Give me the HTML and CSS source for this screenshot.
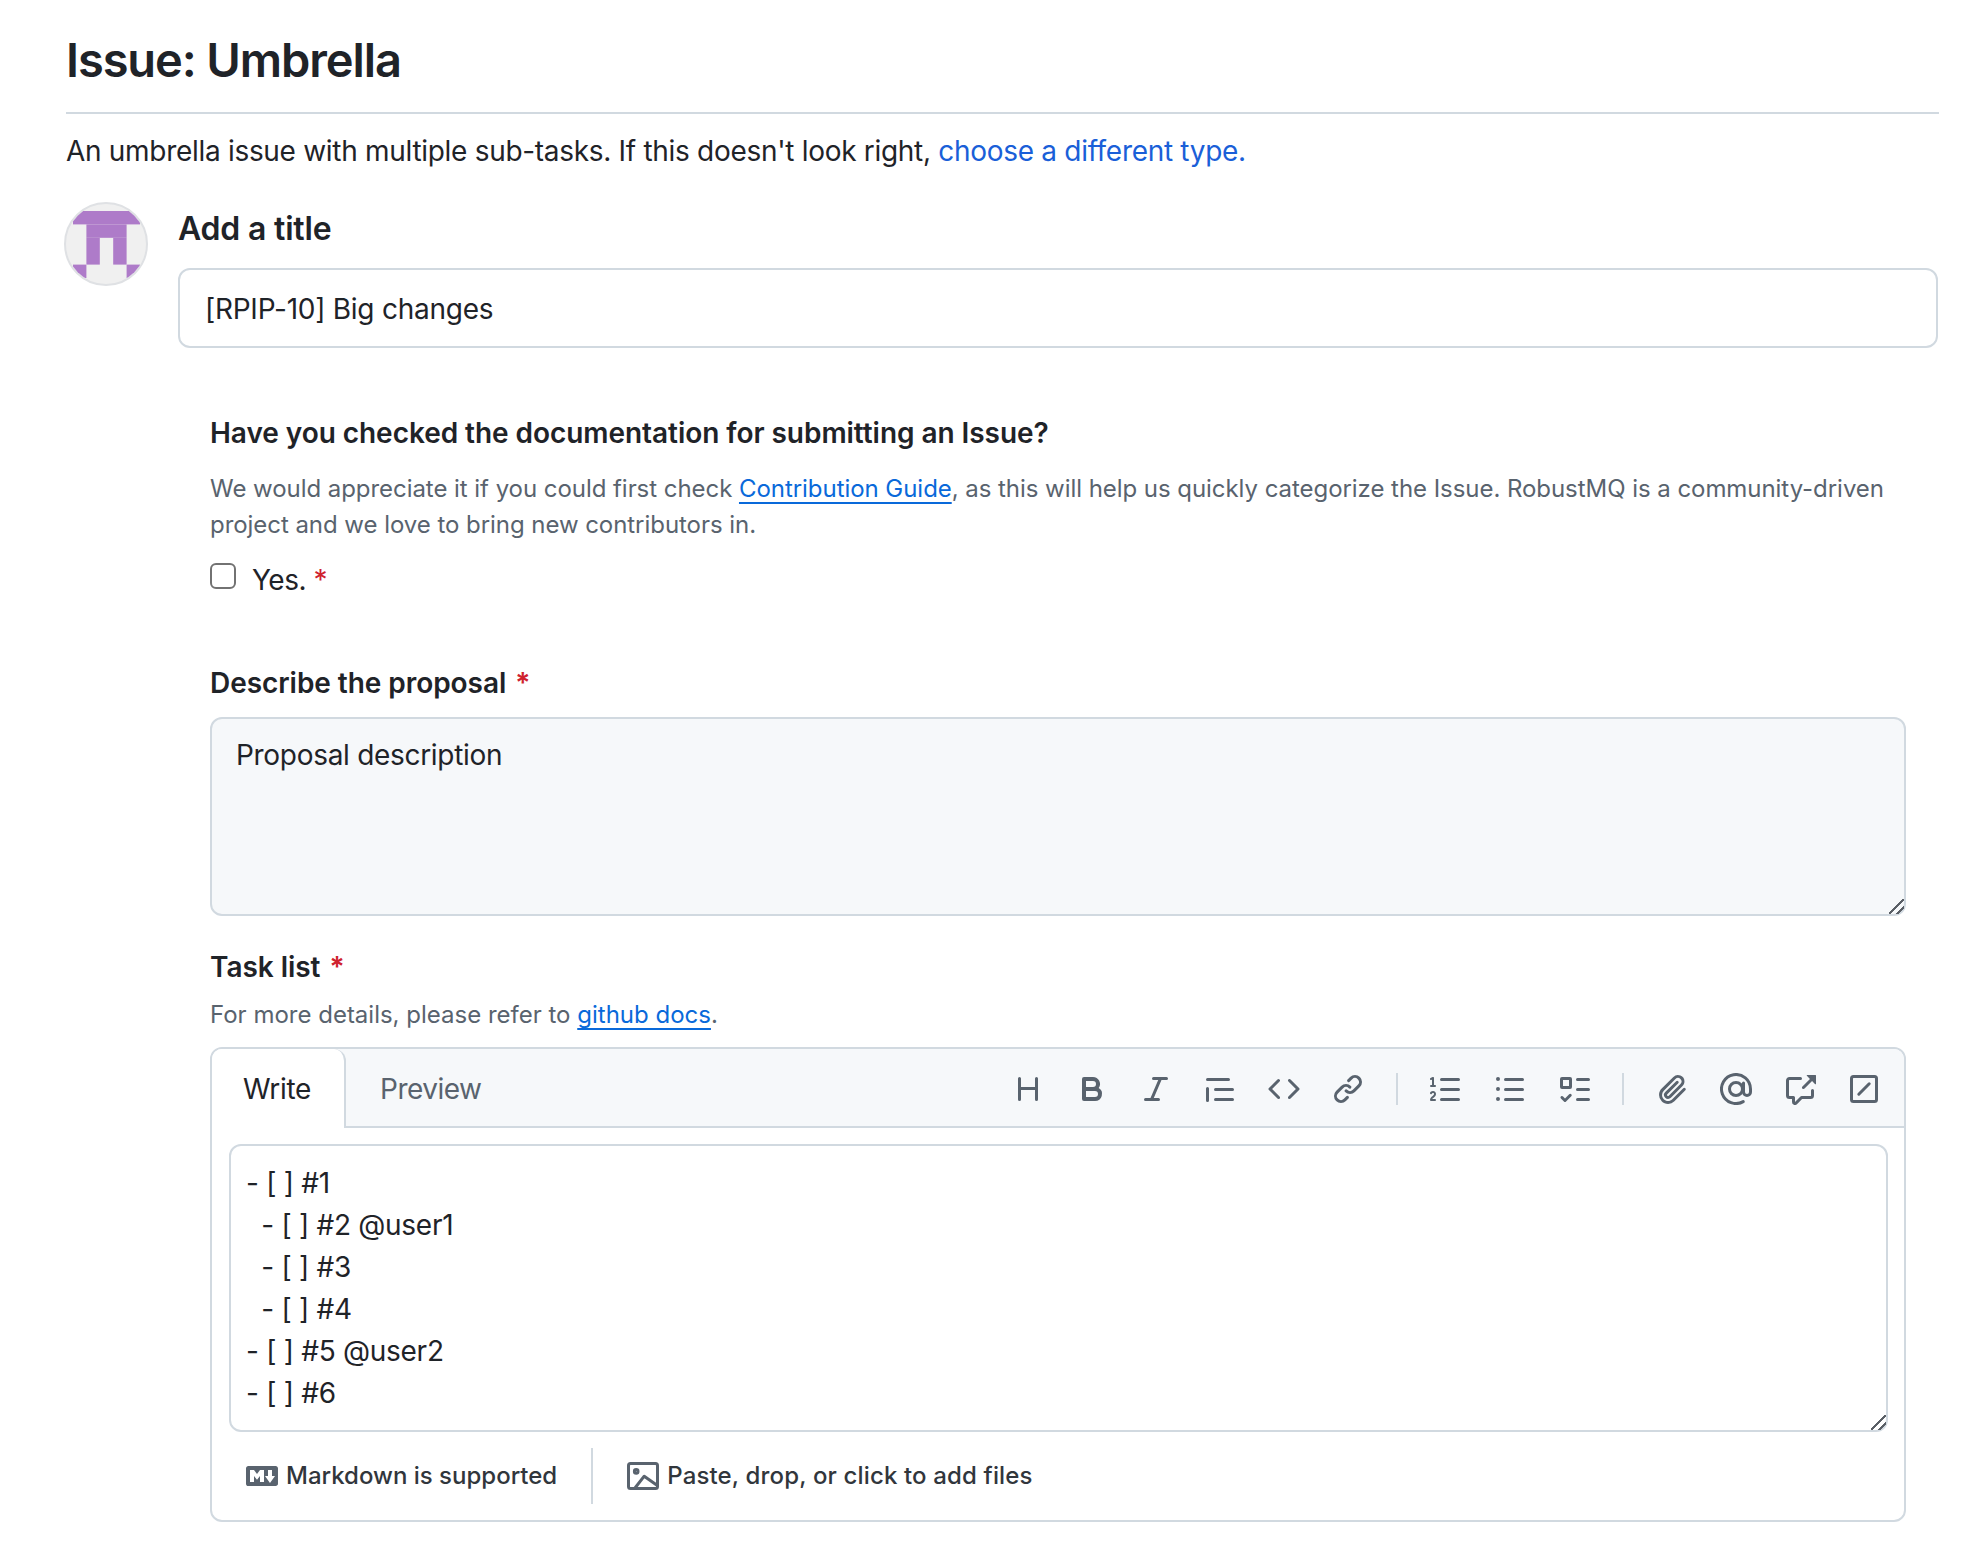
FILE: index.html
```html
<!DOCTYPE html>
<html lang="en">
<head>
  <meta charset="UTF-8">
  <title>Issue: Umbrella</title>
  <link rel="stylesheet" href="styles.css">
</head>
<body>
  <h1>Issue: Umbrella</h1>
  <p class="intro">An umbrella issue with multiple sub-tasks. If this doesn't look right, <a href="#">choose a different type.</a></p>

  <div class="composer">
    <div class="avatar">
      <svg width="80" height="80" viewBox="0 0 80 80" fill="#ae7bc9">
        <rect x="7" y="7" width="67" height="13.4"/>
        <rect x="20.4" y="20.4" width="40.2" height="13.4"/>
        <rect x="20.4" y="33.8" width="13.4" height="26.8"/>
        <rect x="47.2" y="33.8" width="13.4" height="26.8"/>
        <rect x="7" y="60.6" width="13.4" height="13.4"/>
        <rect x="60.6" y="60.6" width="13.4" height="13.4"/>
      </svg>
    </div>
    <div class="title-col">
      <label class="title-label" for="title">Add a title</label>
      <input class="title-input" id="title" type="text" value="[RPIP-10] Big changes">
    </div>
  </div>

  <form class="issue-form">
    <section class="field field-docs">
      <h3 class="field-label">Have you checked the documentation for submitting an Issue?</h3>
      <p class="note">We would appreciate it if you could first check <a href="#">Contribution Guide</a>, as this will help us quickly categorize the Issue. RobustMQ is a community-driven project and we love to bring new contributors in.</p>
      <label class="check-row">
        <input type="checkbox">
        <span>Yes. <span class="req">*</span></span>
      </label>
    </section>

    <section class="field field-proposal">
      <h3 class="field-label">Describe the proposal <span class="req">*</span></h3>
      <textarea class="proposal">Proposal description</textarea>
    </section>

    <section class="field field-tasks">
      <h3 class="field-label">Task list <span class="req">*</span></h3>
      <p class="note note-tasks">For more details, please refer to <a href="#">github docs</a>.</p>

      <div class="editor">
        <div class="editor-head">
          <div class="tabs">
            <button type="button" class="tab active">Write</button>
            <button type="button" class="tab">Preview</button>
          </div>
          <div class="toolbar">
            <svg class="icon" viewBox="0 0 16 16"><path d="M3.75 2a.75.75 0 0 1 .75.75V7h7V2.75a.75.75 0 0 1 1.5 0v10.5a.75.75 0 0 1-1.5 0V8.5h-7v4.75a.75.75 0 0 1-1.5 0V2.75A.75.75 0 0 1 3.75 2Z"/></svg>
            <svg class="icon" viewBox="0 0 16 16"><path d="M4 2h4.5a3.501 3.501 0 0 1 2.852 5.53A3.499 3.499 0 0 1 9.5 14H4a1 1 0 0 1-1-1V3a1 1 0 0 1 1-1Zm1 7v3h4.5a1.5 1.5 0 0 0 0-3Zm3.5-2a1.5 1.5 0 0 0 0-3H5v3Z"/></svg>
            <svg class="icon" viewBox="0 0 16 16"><path d="M6 2.75A.75.75 0 0 1 6.75 2h6.5a.75.75 0 0 1 0 1.5h-2.505l-3.858 9H9.25a.75.75 0 0 1 0 1.5h-6.5a.75.75 0 0 1 0-1.5h2.505l3.858-9H6.75A.75.75 0 0 1 6 2.75Z"/></svg>
            <svg class="icon" viewBox="0 0 16 16"><path d="M1.75 2.5h10.5a.75.75 0 0 1 0 1.5H1.75a.75.75 0 0 1 0-1.5Zm4 5h8.5a.75.75 0 0 1 0 1.5h-8.5a.75.75 0 0 1 0-1.5Zm0 5h8.5a.75.75 0 0 1 0 1.5h-8.5a.75.75 0 0 1 0-1.5ZM2.5 7.75v6a.75.75 0 0 1-1.5 0v-6a.75.75 0 0 1 1.5 0Z"/></svg>
            <svg class="icon" viewBox="0 0 16 16"><path d="m11.28 3.22 4.25 4.25a.75.75 0 0 1 0 1.06l-4.25 4.25a.749.749 0 0 1-1.275-.326.749.749 0 0 1 .215-.734L13.94 8l-3.72-3.72a.749.749 0 0 1 .326-1.275.749.749 0 0 1 .734.215Zm-6.56 0a.751.751 0 0 1 1.042.018.751.751 0 0 1 .018 1.042L2.06 8l3.72 3.72a.749.749 0 0 1-.326 1.275.749.749 0 0 1-.734-.215L.47 8.53a.75.75 0 0 1 0-1.06Z"/></svg>
            <svg class="icon" viewBox="0 0 16 16"><path d="m7.775 3.275 1.25-1.25a3.5 3.5 0 1 1 4.95 4.95l-2.5 2.5a3.5 3.5 0 0 1-4.95 0 .751.751 0 0 1 .018-1.042.751.751 0 0 1 1.042-.018 1.998 1.998 0 0 0 2.83 0l2.5-2.5a2.002 2.002 0 0 0-2.83-2.83l-1.25 1.25a.751.751 0 0 1-1.042-.018.751.751 0 0 1-.018-1.042Zm-4.69 9.64a1.998 1.998 0 0 0 2.83 0l1.25-1.25a.751.751 0 0 1 1.042.018.751.751 0 0 1 .018 1.042l-1.25 1.25a3.5 3.5 0 1 1-4.95-4.95l2.5-2.5a3.5 3.5 0 0 1 4.95 0 .751.751 0 0 1-.018 1.042.751.751 0 0 1-1.042.018 1.998 1.998 0 0 0-2.83 0l-2.5 2.5a1.998 1.998 0 0 0 0 2.83Z"/></svg>
            <span class="tool-sep"></span>
            <svg class="icon" viewBox="0 0 16 16"><path d="M5 3.25a.75.75 0 0 1 .75-.75h8.5a.75.75 0 0 1 0 1.5h-8.5A.75.75 0 0 1 5 3.25Zm0 5a.75.75 0 0 1 .75-.75h8.5a.75.75 0 0 1 0 1.5h-8.5A.75.75 0 0 1 5 8.25Zm0 5a.75.75 0 0 1 .75-.75h8.5a.75.75 0 0 1 0 1.5h-8.5a.75.75 0 0 1-.75-.75ZM.924 10.32a.5.5 0 0 1-.851-.525l.001-.001.001-.002.002-.004.007-.011c.097-.144.215-.273.348-.384.228-.19.588-.392 1.068-.392.468 0 .858.181 1.126.484.259.294.377.673.377 1.038 0 .987-.686 1.495-1.156 1.845l-.047.035c-.303.225-.522.4-.654.597h1.357a.5.5 0 0 1 0 1H.5a.5.5 0 0 1-.5-.5c0-1.005.692-1.52 1.167-1.875l.035-.025c.531-.396.8-.625.8-1.078a.57.57 0 0 0-.128-.376C1.806 10.068 1.695 10 1.5 10a.658.658 0 0 0-.429.163.835.835 0 0 0-.144.153ZM2.003 2.5V6h.503a.5.5 0 0 1 0 1H.5a.5.5 0 0 1 0-1h.503V3.308l-.28.14a.5.5 0 0 1-.446-.895l1.003-.5a.5.5 0 0 1 .723.447Z"/></svg>
            <svg class="icon" viewBox="0 0 16 16"><path d="M5.75 2.5h8.5a.75.75 0 0 1 0 1.5h-8.5a.75.75 0 0 1 0-1.5Zm0 5h8.5a.75.75 0 0 1 0 1.5h-8.5a.75.75 0 0 1 0-1.5Zm0 5h8.5a.75.75 0 0 1 0 1.5h-8.5a.75.75 0 0 1 0-1.5ZM2 14a1 1 0 1 1 0-2 1 1 0 0 1 0 2Zm1-6a1 1 0 1 1-2 0 1 1 0 0 1 2 0ZM2 4a1 1 0 1 1 0-2 1 1 0 0 1 0 2Z"/></svg>
            <svg class="icon" viewBox="0 0 16 16"><path d="M2 2h4a1 1 0 0 1 1 1v4a1 1 0 0 1-1 1H2a1 1 0 0 1-1-1V3a1 1 0 0 1 1-1Zm4.655 8.595a.75.75 0 0 1 0 1.06L4.03 14.28a.75.75 0 0 1-1.06 0l-1.5-1.5a.749.749 0 0 1 .326-1.275.749.749 0 0 1 .734.215l.97.97 2.095-2.095a.75.75 0 0 1 1.06 0ZM9.75 2.5h5.5a.75.75 0 0 1 0 1.5h-5.5a.75.75 0 0 1 0-1.5Zm0 5h5.5a.75.75 0 0 1 0 1.5h-5.5a.75.75 0 0 1 0-1.5Zm0 5h5.5a.75.75 0 0 1 0 1.5h-5.5a.75.75 0 0 1 0-1.5Zm-7.25-9v3h3v-3Z"/></svg>
            <span class="tool-sep"></span>
            <svg class="icon" viewBox="0 0 16 16"><path d="M12.212 3.02a1.753 1.753 0 0 0-2.478.003l-5.83 5.83a3.007 3.007 0 0 0-.88 2.127c0 .795.315 1.551.88 2.116.567.567 1.333.89 2.126.89.79 0 1.548-.321 2.116-.89l5.48-5.48a.75.75 0 0 1 1.061 1.06l-5.48 5.48a4.492 4.492 0 0 1-3.177 1.33c-1.2 0-2.345-.487-3.187-1.33a4.483 4.483 0 0 1-1.32-3.177c0-1.195.475-2.341 1.32-3.186l5.83-5.83a3.25 3.25 0 0 1 5.553 2.297c0 .863-.343 1.691-.953 2.301L7.439 12.39c-.375.377-.884.59-1.416.593a1.998 1.998 0 0 1-1.412-.593 1.992 1.992 0 0 1 0-2.828l5.48-5.48a.751.751 0 0 1 1.042.018.751.751 0 0 1 .018 1.042l-5.48 5.48a.492.492 0 0 0 0 .707.499.499 0 0 0 .706 0l5.833-5.84a1.755 1.755 0 0 0 .002-2.469Z"/></svg>
            <svg class="icon line" viewBox="0 0 16 16"><circle cx="8" cy="8" r="3.25"/><path d="M11.6 14.3A7.25 7.25 0 1 1 15.25 8v1.5a1.75 1.75 0 0 1-3.5 0V5"/></svg>
            <svg class="icon" viewBox="0 0 16 16"><path d="M2.75 3.5a.25.25 0 0 0-.25.25v7.5c0 .138.112.25.25.25h2a.75.75 0 0 1 .75.75v2.19l2.72-2.72a.749.749 0 0 1 .53-.22h4.5a.25.25 0 0 0 .25-.25v-2.5a.75.75 0 0 1 1.5 0v2.5A1.75 1.75 0 0 1 13.25 13H9.06l-2.573 2.573A1.458 1.458 0 0 1 4 14.543V13H2.75A1.75 1.75 0 0 1 1 11.25v-7.5C1 2.784 1.784 2 2.75 2h5.5a.75.75 0 0 1 0 1.5ZM16 1.25v4.146a.25.25 0 0 1-.427.177L14.03 4.03l-3.75 3.75a.749.749 0 0 1-1.275-.326.749.749 0 0 1 .215-.734l3.75-3.75-1.543-1.543A.25.25 0 0 1 11.604 1h4.146a.25.25 0 0 1 .25.25Z"/></svg>
            <svg class="icon line" viewBox="0 0 16 16"><rect x="1.75" y="1.75" width="12.5" height="12.5" rx="1"/><path d="M5.4 10.6 10.6 5.4"/></svg>
          </div>
        </div>

        <div class="editor-body">
          <textarea class="tasks">- [ ] #1
  - [ ] #2 @user1
  - [ ] #3
  - [ ] #4
- [ ] #5 @user2
- [ ] #6</textarea>
        </div>

        <div class="editor-foot">
          <span class="foot-item foot-md">
            <svg class="icon" viewBox="0 0 16 16"><path d="M14.85 3c.63 0 1.15.52 1.14 1.15v7.7c0 .63-.51 1.15-1.15 1.15H1.15C.52 13 0 12.48 0 11.84V4.15C0 3.52.52 3 1.15 3ZM9 11V5H7L5.5 7 4 5H2v6h2V8l1.5 1.92L7 8v3Zm2.99.5L14.5 8H13V5h-2v3H9.5Z"/></svg>
            Markdown is supported
          </span>
          <span class="foot-item foot-files">
            <svg class="icon line" viewBox="0 0 16 16"><rect x=".75" y="1.75" width="14.5" height="12.5" rx="1"/><circle cx="4.6" cy="5.7" r=".9"/><path d="M4 14 8.6 8.1 15 12.6"/></svg>
            Paste, drop, or click to add files
          </span>
        </div>
      </div>
    </section>
  </form>
</body>
</html>
```

FILE: styles.css
```css
* { box-sizing: border-box; }
body { margin: 0; padding: 30px 35px 26px 66px; font-family: Inter, "Liberation Sans", sans-serif; font-size: 28px; line-height: 42px; letter-spacing: -0.3px; color: #1f2328; background: #fff; }
a { color: #0969da; text-decoration: none; }

h1 { margin: 0; padding-bottom: 22px; font-size: 47px; line-height: 60px; font-weight: 600; letter-spacing: -1.1px; border-bottom: 2px solid #d1d9e0; }
.intro { margin: 16px 0 0; }
.intro a { color: #1a5fd8; }

.composer { display: flex; margin: 30px 1px 0 -2px; }
.avatar { flex: none; width: 84px; height: 84px; border: 2px solid #dfe1e4; border-radius: 50%; background: #f0f0f0; overflow: hidden; }
.avatar svg { display: block; }
.title-col { flex: 1; margin-left: 30px; }
.title-label { display: block; margin-top: 6px; font-size: 32px; line-height: 42px; font-weight: 600; letter-spacing: -0.2px; }
.title-input { display: block; width: 100%; height: 80px; margin-top: 18px; padding: 2px 25px 0; font: inherit; letter-spacing: -0.25px; color: inherit; border: 2px solid #d1d9e0; border-radius: 12px; background: #fff; }

.issue-form { margin: 64px 33px 0 144px; }
.field-label { margin: 0; font-size: 28px; line-height: 42px; font-weight: 600; letter-spacing: -0.05px; }
.req { color: #cf222e; margin-left: 2px; }
.note { margin: 0; font-size: 24px; line-height: 36px; letter-spacing: -0.05px; color: #59636e; }
.note a { color: #0969da; text-decoration: underline; text-underline-offset: 5px; }

.field-docs .note { margin-top: 17px; }
.check-row { display: flex; align-items: flex-start; margin-top: 16px; letter-spacing: -0.5px; }
.check-row .req { margin-left: 0; }
.check-row input { flex: none; appearance: none; width: 26px; height: 26px; margin: 4px 16px 0 0; background: #fff; border: 2px solid #727272; border-radius: 6px; }
.field-proposal { margin-top: 61px; }
.proposal { display: block; width: 100%; height: 199px; margin-top: 13px; padding: 15px 24px; font: inherit; letter-spacing: inherit; color: inherit; background: #f6f8fa; border: 2px solid #d1d9e0; border-radius: 12px; }
.field-tasks { margin-top: 30px; }
.note-tasks { margin-top: 9px; letter-spacing: 0; }
textarea::-webkit-resizer { background: linear-gradient(135deg, transparent 45%, #5a5f66 45% 54%, transparent 54% 73%, #5a5f66 73% 82%, transparent 82%); }

.editor { margin-top: 14px; height: 475px; border: 2px solid #d1d9e0; border-radius: 12px; }
.editor-head { display: flex; justify-content: space-between; height: 79px; background: #f6f8fa; border-bottom: 2px solid #d1d9e0; border-radius: 10px 10px 0 0; }
.tabs { display: flex; }
.tab { margin: 0; padding: 2px 26px 0; height: 77px; font: inherit; letter-spacing: -0.5px; color: #59636e; background: none; border: 0; }
.tab.active { width: 134px; height: 79px; padding: 0 2px 0 0; letter-spacing: -0.3px; color: #1f2328; background: #fff; border-right: 2px solid #d1d9e0; border-radius: 10px 12px 0 0; }
.tab.active + .tab { padding-left: 34px; }
.toolbar { display: flex; align-items: center; gap: 32px; padding: 2px 24px 0 0; }
.icon { display: block; flex: none; width: 32px; height: 32px; fill: #59636e; }
.icon.line { fill: none; stroke: #59636e; stroke-width: 1.5; stroke-linecap: round; stroke-linejoin: round; }
.tool-sep { width: 2px; height: 32px; background: #d1d9e0; }

.editor-body { padding: 16px 16px 0 17px; }
.tasks { display: block; width: 100%; height: 288px; padding: 16px 15px 0; font: inherit; letter-spacing: -0.28px; color: inherit; background: #fff; border: 2px solid #d1d9e0; border-radius: 12px; }

.editor-foot { display: flex; align-items: center; height: 56px; margin-top: 16px; padding-left: 34px; font-size: 24px; font-weight: 500; letter-spacing: 0; color: #31363c; }
.foot-item { display: flex; align-items: center; gap: 8px; }
.foot-md { height: 56px; padding-right: 34px; border-right: 2px solid #d1d9e0; }
.foot-files { margin-left: 34px; letter-spacing: 0.15px; }
```
